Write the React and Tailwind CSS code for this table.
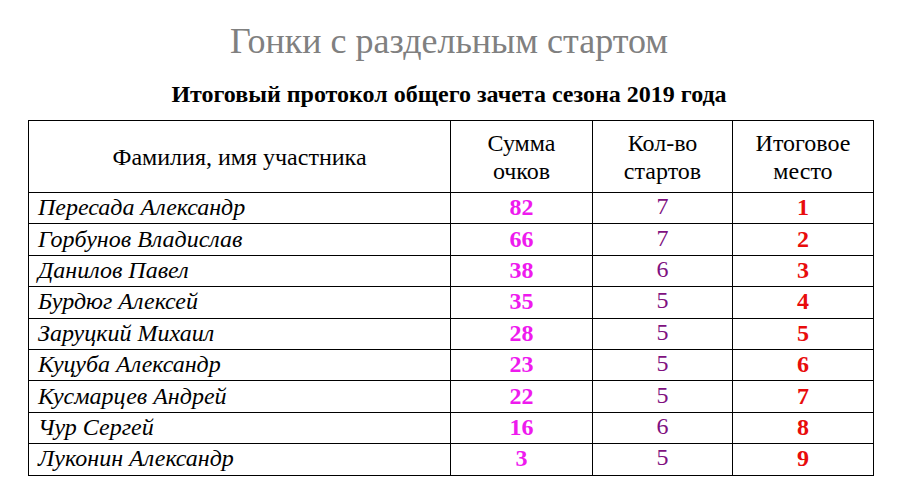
import React from "react";

const rows = [
  ["Пересада Александр", 82, 7, 1],
  ["Горбунов Владислав", 66, 7, 2],
  ["Данилов Павел", 38, 6, 3],
  ["Бурдюг Алексей", 35, 5, 4],
  ["Заруцкий Михаил", 28, 5, 5],
  ["Куцуба Александр", 23, 5, 6],
  ["Кусмарцев Андрей", 22, 5, 7],
  ["Чур Сергей", 16, 6, 8],
  ["Луконин Александр", 3, 5, 9],
];

export default function App() {
  return (
    <div className="w-[898px] h-[500px] bg-white text-black overflow-hidden font-['Liberation_Serif',serif]">
      <div className="h-[78px] flex items-center justify-center pt-[4px]">
        <h1 className="text-[36px] leading-none text-[#808080]">Гонки с раздельным стартом</h1>
      </div>
      <div className="h-[32px] flex items-center justify-center">
        <h2 className="text-[24px] leading-none font-bold">Итоговый протокол общего зачета сезона 2019 года</h2>
      </div>
      <div className="pl-[28px] pt-[10px]">
        <table className="border-collapse w-[845px] table-fixed">
          <colgroup>
            <col className="w-[422px]" />
            <col className="w-[142px]" />
            <col className="w-[140px]" />
            <col className="w-[141px]" />
          </colgroup>
          <thead>
            <tr className="h-[72px]">
              <th className="border-[1.5px] border-black font-normal text-[24px] leading-[28px] text-center">
                Фамилия, имя участника
              </th>
              <th className="border-[1.5px] border-black font-normal text-[24px] leading-[28px] text-center">
                Сумма
                <br />
                очков
              </th>
              <th className="border-[1.5px] border-black font-normal text-[24px] leading-[28px] text-center">
                Кол-во
                <br />
                стартов
              </th>
              <th className="border-[1.5px] border-black font-normal text-[24px] leading-[28px] text-center">
                Итоговое
                <br />
                место
              </th>
            </tr>
          </thead>
          <tbody>
            {rows.map(([name, pts, starts, place]) => (
              <tr key={name} className="h-[31.4px]">
                <td className="border-[1.5px] border-black italic text-[24px] leading-none pl-[9px] pb-[2px]">{name}</td>
                <td className="border-[1.5px] border-black text-center font-bold text-[24px] leading-none text-[#ee1aee] pb-[2px]">{pts}</td>
                <td className="border-[1.5px] border-black text-center text-[24px] leading-none text-[#801080] pb-[4px]">{starts}</td>
                <td className="border-[1.5px] border-black text-center font-bold text-[24px] leading-none text-[#e80c0c] pb-[2px]">{place}</td>
              </tr>
            ))}
          </tbody>
        </table>
      </div>
    </div>
  );
}
